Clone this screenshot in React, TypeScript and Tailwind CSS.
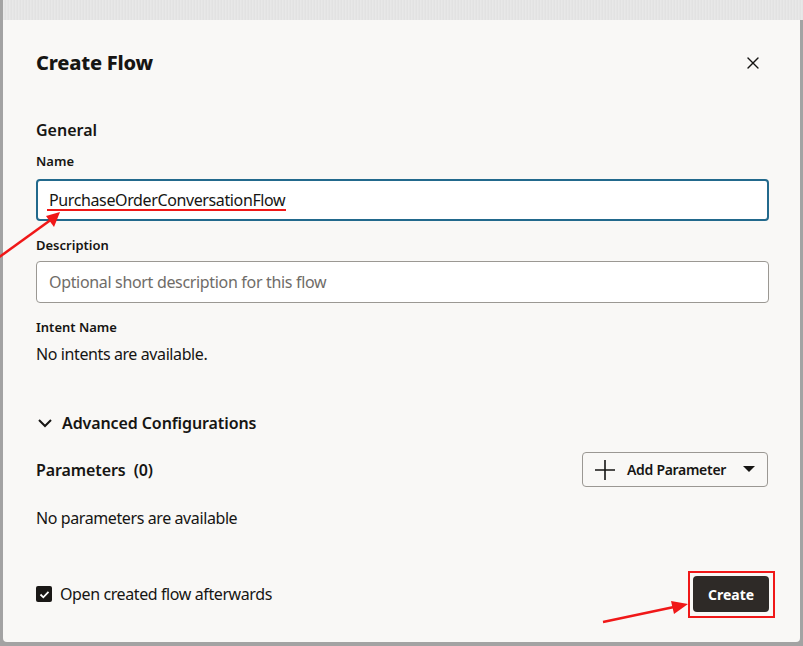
import React from 'react';
import { X } from 'lucide-react';

const font = { fontFamily: '"Noto Sans", "Liberation Sans", sans-serif' };

const FieldLabel: React.FC<{ text: string; className?: string }> = ({ text, className }) => (
  <div className={`text-[13px] leading-[18px] font-semibold text-[#161513] ${className ?? ''}`}>{text}</div>
);

const Annotations: React.FC = () => (
  <svg className="absolute inset-0 pointer-events-none" width="803" height="646" viewBox="0 0 803 646">
    {/* underline under the name */}
    <line x1="47" y1="210" x2="286" y2="210" stroke="#f01818" strokeWidth="2.2" />
    {/* arrow to the name */}
    <line x1="-2" y1="258" x2="52" y2="219" stroke="#f01818" strokeWidth="2.5" />
    <polygon points="60,212 46,216 54,227" fill="#f01818" />
    {/* box round the create button */}
    <rect x="689" y="572" width="85" height="45" fill="none" stroke="#f01818" strokeWidth="2" />
    {/* arrow to the create button */}
    <line x1="603" y1="622" x2="674" y2="607" stroke="#f01818" strokeWidth="2.5" />
    <polygon points="688,604 671,601 674,614" fill="#f01818" />
  </svg>
);

export default function App() {
  return (
    <div className="relative w-[803px] h-[646px] overflow-hidden bg-[#a3a3a3]" style={font}>
      <div className="h-[20px] ml-[3px] bg-[repeating-linear-gradient(90deg,#e2e2e2_0px,#eeeeee_1px,#dcdcdc_2px,#e8e8e8_3px)]" />
      <div className="ml-[3px] w-[797px] h-[622px] bg-[#f9f8f6] rounded-b-[4px] pl-[33px] pr-[31px] pt-[29px] text-[#161513]">
        <div className="flex items-center justify-between h-[28px]">
          <h1 className="text-[20px] leading-[28px] font-extrabold tracking-[-0.2px]">Create Flow</h1>
          <X className="mr-[6px] text-[#161513]" size={20} strokeWidth={1.6} />
        </div>

        <div className="mt-[41px] text-[16px] leading-[24px] font-semibold">General</div>

        <FieldLabel text="Name" className="mt-[10px]" />
        <div className="mt-[9px] h-[42px] rounded-[4px] border-2 border-[#22698c] bg-white flex items-center pl-[11px]">
          <span className="text-[16px] tracking-[-0.38px]">PurchaseOrderConversationFlow</span>
        </div>

        <FieldLabel text="Description" className="mt-[15px]" />
        <div className="mt-[7px] h-[42px] rounded-[4px] border border-[#9b9893] bg-white flex items-center pl-[12px]">
          <span className="text-[16px] tracking-[-0.33px] text-[#6f6c68]">Optional short description for this flow</span>
        </div>

        <FieldLabel text="Intent Name" className="mt-[15px]" />
        <div className="mt-[6px] text-[16px] leading-[24px] tracking-[-0.4px]">No intents are available.</div>

        <div className="mt-[45px] flex items-center h-[24px]">
          <svg width="16" height="10" viewBox="0 0 16 10" className="ml-[1px]">
            <path d="M2 2l6 6 6-6" fill="none" stroke="#161513" strokeWidth="2" />
          </svg>
          <span className="ml-[9px] text-[16px] leading-[24px] font-semibold tracking-[-0.1px]">Advanced Configurations</span>
        </div>

        <div className="mt-[17px] flex items-center justify-between">
          <div className="text-[16px] font-semibold whitespace-pre tracking-[-0.1px]">Parameters  (0)</div>
          <button className="h-[35px] w-[186px] mr-[1px] rounded-[4px] border border-[#9b9893] flex items-center pl-[11px]">
            <svg width="22" height="22" viewBox="0 0 22 22">
              <path d="M11 1v20M1 11h20" stroke="#161513" strokeWidth="1.6" />
            </svg>
            <span className="ml-[11px] text-[14px] font-semibold tracking-[-0.3px]">Add Parameter</span>
            <svg width="12" height="7" viewBox="0 0 12 7" className="ml-[17px]">
              <path d="M0 0h12L6 6z" fill="#161513" />
            </svg>
          </button>
        </div>

        <div className="mt-[19px] text-[16px] leading-[24px] tracking-[-0.4px]">No parameters are available</div>

        <div className="mt-[46px] flex items-center justify-between">
          <label className="flex items-center">
            <span className="w-[16px] h-[16px] rounded-[2px] bg-[#1a1816] flex items-center justify-center">
              <svg width="11" height="9" viewBox="0 0 11 9">
                <path d="M1.5 4.5l2.8 2.8L9.5 1.8" fill="none" stroke="white" strokeWidth="1.8" />
              </svg>
            </span>
            <span className="ml-[8px] text-[16px] tracking-[-0.4px]">Open created flow afterwards</span>
          </label>
          <button className="h-[36px] w-[76px] rounded-[4px] bg-[#2e2a27] text-white text-[14px] font-bold">Create</button>
        </div>
      </div>
      <Annotations />
    </div>
  );
}
